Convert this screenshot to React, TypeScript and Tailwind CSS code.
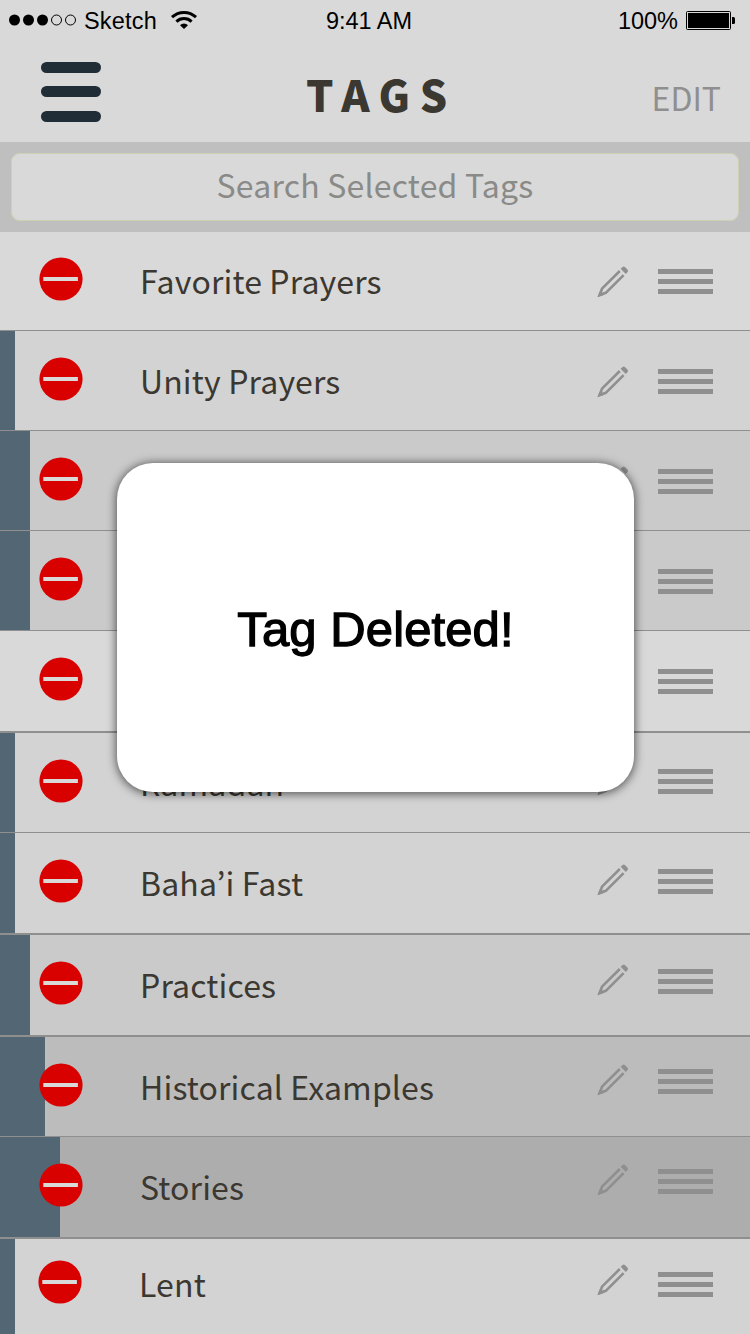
import React from "react";

type Tag = {
  label?: string;
  row: string;
  bar?: string;
  remove: string;
  text: string;
  pencil?: string;
  handle: string;
};

const tags: Tag[] = [
  { label: "Favorite Prayers", row: "h-[99px] border-b bg-[#d9d9d9]", remove: "ml-[39px] mt-[25px]", text: "mt-[28px]", pencil: "mt-[34px]", handle: "mt-[37px]" },
  { label: "Unity Prayers", row: "h-[100px] border-b bg-[#d3d3d3]", bar: "w-[15px]", remove: "ml-[39px] mt-[26px]", text: "mt-[29px]", pencil: "mt-[35px]", handle: "mt-[38px]" },
  { row: "h-[100px] border-b bg-[#cacaca]", bar: "w-[30px]", remove: "ml-[39px] mt-[26px]", text: "mt-[29px]", pencil: "mt-[35px]", handle: "mt-[38px]" },
  { row: "h-[100px] border-b bg-[#cacaca]", bar: "w-[30px]", remove: "ml-[39px] mt-[26px]", text: "mt-[29px]", handle: "mt-[38px]" },
  { row: "h-[102px] border-b-2 bg-[#d9d9d9]", remove: "ml-[39px] mt-[26px]", text: "mt-[29px]", handle: "mt-[38px]" },
  { label: "Ramadan", row: "h-[100px] border-b bg-[#d3d3d3]", bar: "w-[15px]", remove: "ml-[39px] mt-[26px]", text: "mt-[29px]", pencil: "mt-[31px]", handle: "mt-[36px]" },
  { label: "Baha’i Fast", row: "h-[102px] border-b-2 bg-[#d3d3d3]", bar: "w-[15px]", remove: "ml-[39px] mt-[26px]", text: "mt-[29px]", pencil: "mt-[31px]", handle: "mt-[36px]" },
  { label: "Practices", row: "h-[102px] border-b-2 bg-[#cacaca]", bar: "w-[30px]", remove: "ml-[39px] mt-[26px]", text: "mt-[29px]", pencil: "mt-[29px]", handle: "mt-[34px]" },
  { label: "Historical Examples", row: "h-[100px] border-b bg-[#bcbcbc]", bar: "w-[45px]", remove: "ml-[39px] mt-[26px]", text: "mt-[29px]", pencil: "mt-[27px]", handle: "mt-[32px]" },
  { label: "Stories", row: "h-[102px] border-b-2 bg-[#adadad]", bar: "w-[60px]", remove: "ml-[39px] mt-[26px]", text: "mt-[29px]", pencil: "mt-[27px]", handle: "mt-[32px]" },
  { label: "Lent", row: "h-[95px] bg-[#d3d3d3]", bar: "w-[15px] -top-0.5", remove: "ml-[38px] mr-px mt-[21px]", text: "-ml-px mr-px mt-[24px]", pencil: "mt-[25px]", handle: "mt-[33px]" },
];

const sans = "font-['Noto_Sans_CJK_KR',sans-serif]";

function RemoveIcon({ className }: { className: string }) {
  return (
    <svg className={`relative h-11 w-11 shrink-0 ${className}`} viewBox="0 0 44 44">
      <circle cx="22" cy="22" r="21.6" fill="#d90000" />
      <rect x="4.3" y="20" width="34.6" height="4" fill="#d9d9d9" />
    </svg>
  );
}

function PencilIcon() {
  return (
    <svg className="h-8 w-8" viewBox="0 0 32 32" fill="none" stroke="#8f8f8f">
      <path d="M22.8 5 L5 22.7 L2.8 28.8 L8.8 26.8 L26.6 9.2" strokeWidth="2.6" />
      <path d="M0.4 31.2 L2.6 25.6 L6.4 29.2 Z" fill="#8f8f8f" stroke="none" />
      <path d="M23.6 2.7 L25.6 0.9 Q26.8 0.1 27.9 1.1 L30.6 3.8 Q31.5 5 30.6 6.1 L28.8 8.1 Z" fill="#8f8f8f" stroke="none" />
    </svg>
  );
}

function DragHandle({ className }: { className: string }) {
  return (
    <div className={`flex w-[55px] flex-col gap-[5px] ${className}`}>
      <div className="h-[5px] bg-[#8f8f8f]" />
      <div className="h-[5px] bg-[#8f8f8f]" />
      <div className="h-[5px] bg-[#8f8f8f]" />
    </div>
  );
}

function TagRow({ tag }: { tag: Tag }) {
  return (
    <li className={`relative flex items-start border-[#8f8f8f] ${tag.row}`}>
      {tag.bar && <div className={`absolute bottom-0 left-0 top-0 bg-[#536673] ${tag.bar}`} />}
      <RemoveIcon className={tag.remove} />
      <div className={`w-[457px] whitespace-nowrap pl-[57px] text-[32px] leading-[40px] tracking-[0.14px] text-[#3b3731] ${sans} ${tag.text}`}>
        {tag.label}
      </div>
      <div className={`ml-[57px] h-8 w-8 shrink-0 ${tag.pencil ?? ""}`}>{tag.pencil && <PencilIcon />}</div>
      <DragHandle className={`ml-[29px] shrink-0 ${tag.handle}`} />
    </li>
  );
}

function StatusBar() {
  return (
    <div className="grid h-10 grid-cols-3 items-center font-['Liberation_Sans',sans-serif] text-[23.5px] leading-10 text-black">
      <div className="flex items-center pl-[9px]">
        <svg className="h-[12px] w-[68px]" viewBox="0 0 68 12">
          <circle cx="5.5" cy="6" r="5.5" />
          <circle cx="19.5" cy="6" r="5.5" />
          <circle cx="33.5" cy="6" r="5.5" />
          <circle cx="47.5" cy="6" r="5" fill="none" stroke="#000" />
          <circle cx="61.5" cy="6" r="5" fill="none" stroke="#000" />
        </svg>
        <span className="ml-[7px] w-[73px] translate-y-px tracking-[0.2px]">Sketch</span>
        <svg className="ml-[13px] h-[19px] w-[28px] -translate-y-px" viewBox="0 0 28 19" fill="none" stroke="#000" strokeWidth="3">
          <path d="M2 7.2 A17.4 17.4 0 0 1 26 7.2" />
          <path d="M6.4 11.6 A11 11 0 0 1 21.6 11.6" />
          <path d="M10 15.2 A5.6 5.6 0 0 1 18 15.2 L14 19 Z" fill="#000" stroke="none" />
        </svg>
      </div>
      <div className="-translate-x-[6px] translate-y-px text-center">9:41 AM</div>
      <div className="flex items-center justify-end pr-[15px]">
        <span className="translate-y-px">100%</span>
        <svg className="ml-[8px] h-[19px] w-[49px]" viewBox="0 0 49 19">
          <rect x="0.5" y="0.5" width="44" height="18" rx="1" fill="none" stroke="#000" />
          <rect x="2" y="2" width="41" height="15" />
          <path d="M46 6h1.5a1.5 1.5 0 0 1 1.5 1.5v4a1.5 1.5 0 0 1-1.5 1.5H46z" />
        </svg>
      </div>
    </div>
  );
}

export default function App() {
  return (
    <main className="relative h-[1334px] w-[750px] overflow-hidden bg-[#d9d9d9]">
      <StatusBar />
      <header className="grid h-[102px] grid-cols-3 items-start">
        <div className="ml-[41px] mt-[22px] flex h-[60px] w-[60px] flex-col">
          <div className="h-[11px] rounded-full bg-[#212d36]" />
          <div className="mt-[13px] h-[11px] rounded-full bg-[#212d36]" />
          <div className="mt-[14px] h-[11px] rounded-full bg-[#212d36]" />
        </div>
        <h1 className={`ml-[56px] mt-[29px] whitespace-nowrap text-[43px] font-black leading-[48px] tracking-[9.6px] text-[#3b3731] ${sans}`}>TAGS</h1>
        <div className={`mr-[29px] mt-[37px] text-right text-[32px] leading-[40px] text-[#8f8f8f] ${sans}`}>EDIT</div>
      </header>
      <div className="h-[90px] bg-[#bfbfbf] px-[11px] pt-[11px]">
        <div className={`h-[68px] rounded-[9px] bg-[#d9d9d9] pt-[11px] text-center text-[32px] leading-[40px] tracking-[0.2px] text-[#8a8a88] outline outline-1 -outline-offset-1 outline-[#cfcfb4] ${sans}`}>
          Search Selected Tags
        </div>
      </div>
      <ul>
        {tags.map((tag, i) => (
          <TagRow key={i} tag={tag} />
        ))}
      </ul>
      <div
        role="dialog"
        className="absolute left-[117px] top-[463px] flex h-[329px] w-[517px] items-center justify-center rounded-[36px] bg-white shadow-[0_1px_10px_1px_rgba(0,0,0,0.6)]"
      >
        <p className="whitespace-nowrap pt-[2px] font-['Liberation_Sans',sans-serif] text-[49px] leading-[56px] tracking-[0.1px] text-black [-webkit-text-stroke:1.3px_#000]">
          Tag Deleted!
        </p>
      </div>
    </main>
  );
}
